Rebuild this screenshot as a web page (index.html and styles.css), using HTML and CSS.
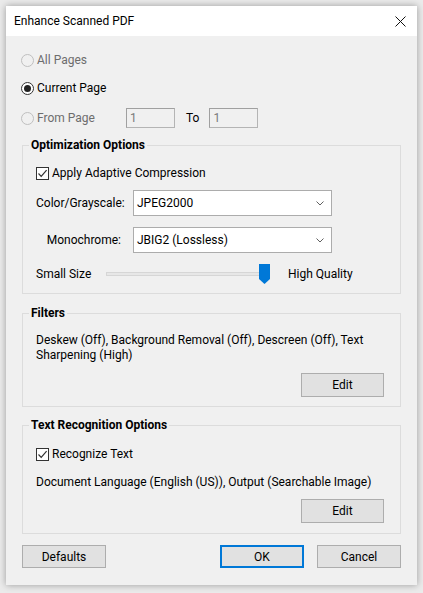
FILE: index.html
```html
<!DOCTYPE html>
<html>
<head>
<meta charset="utf-8">
<title>Enhance Scanned PDF</title>
<link rel="stylesheet" href="styles.css">
</head>
<body>
<div class="dialog">
  <div class="titlebar">
    <span class="title">Enhance Scanned PDF</span>
    <svg class="close" width="11" height="11" viewBox="0 0 11 11"><path d="M0.5 0.5 L10.5 10.5 M10.5 0.5 L0.5 10.5" stroke="#111" stroke-width="1" fill="none"/></svg>
  </div>
  <div class="content">
    <div class="radios">
      <div class="radio-row first disabled"><span class="radio"></span><span>All Pages</span></div>
      <div class="radio-row second"><span class="radio checked"></span><span>Current Page</span></div>
      <div class="radio-row third">
        <span class="radio-label disabled"><span class="radio"></span><span>From Page</span></span>
        <span class="field">1</span>
        <span class="to">To</span>
        <span class="field">1</span>
      </div>
    </div>

    <fieldset class="group opt">
      <legend>Optimization Options</legend>
      <div class="check-row first-check"><span class="checkbox"><svg width="11" height="11" viewBox="0 0 11 11"><path d="M1.5 5.5 L4.2 8.3 L9.6 2.2" stroke="#333" stroke-width="1.2" fill="none"/></svg></span><span>Apply Adaptive Compression</span></div>
      <div class="select-grid">
        <span class="select-label">Color/Grayscale:</span>
        <div class="select"><span>JPEG2000</span><svg width="8" height="5" viewBox="0 0 8 5"><path d="M0.5 0.5 L4 4 L7.5 0.5" stroke="#606060" fill="none"/></svg></div>
        <span class="select-label">Monochrome:</span>
        <div class="select"><span>JBIG2 (Lossless)</span><svg width="8" height="5" viewBox="0 0 8 5"><path d="M0.5 0.5 L4 4 L7.5 0.5" stroke="#606060" fill="none"/></svg></div>
      </div>
      <div class="slider-row">
        <span class="slider-label">Small Size</span>
        <div class="track-wrap">
          <div class="track"></div>
          <svg class="thumb" width="11" height="20" viewBox="0 0 11 20"><path d="M0 0 H11 V15 L5.5 20 L0 15 Z" fill="#0078d7"/></svg>
        </div>
        <span class="slider-high">High Quality</span>
      </div>
    </fieldset>

    <fieldset class="group filters">
      <legend>Filters</legend>
      <p class="desc two-line">Deskew (Off), Background Removal (Off), Descreen (Off), Text<br>Sharpening (High)</p>
      <div class="edit-row filters-edit"><button class="btn">Edit</button></div>
    </fieldset>

    <fieldset class="group ocr">
      <legend>Text Recognition Options</legend>
      <div class="check-row ocr-check"><span class="checkbox"><svg width="11" height="11" viewBox="0 0 11 11"><path d="M1.5 5.5 L4.2 8.3 L9.6 2.2" stroke="#333" stroke-width="1.2" fill="none"/></svg></span><span>Recognize Text</span></div>
      <p class="desc one-line">Document Language (English (US)), Output (Searchable Image)</p>
      <div class="edit-row ocr-edit"><button class="btn">Edit</button></div>
    </fieldset>

    <div class="footer">
      <button class="btn footer-btn">Defaults</button>
      <div class="footer-right">
        <button class="btn footer-btn primary">OK</button>
        <button class="btn footer-btn">Cancel</button>
      </div>
    </div>
  </div>
</div>
</body>
</html>
```

FILE: styles.css
```css
* { box-sizing: border-box; }

html, body {
  margin: 0;
  padding: 0;
}

body {
  width: 423px;
  height: 593px;
  overflow: hidden;
  background: #ebebeb;
  font-family: "Segoe UI", Roboto, "Noto Sans", sans-serif;
  font-size: 12px;
  color: #000;
}

.dialog {
  margin: 6px 0 0 6px;
  width: 411px;
  height: 579px;
  background: #f0f0f0;
  box-shadow: 0 0 7px rgba(0, 0, 0, 0.35);
  display: flex;
  flex-direction: column;
}

.titlebar {
  height: 30px;
  background: #fff;
  display: flex;
  align-items: center;
  justify-content: space-between;
  padding: 0 11px 0 8px;
}

.title {
  font-size: 12px;
  line-height: 16px;
}

.content {
  padding: 0 16px;
  display: flex;
  flex-direction: column;
}

.radios {
  margin-left: -1px;
  display: flex;
  flex-direction: column;
}

.radio-row {
  height: 20px;
  display: flex;
  align-items: center;
  gap: 3px;
}

.radio-row.first { margin-top: 14px; }
.radio-row.second { margin-top: 8px; }
.radio-row.third { margin-top: 10px; gap: 0; }

.disabled { color: #6d6d6d; }

.radio-label {
  display: flex;
  align-items: center;
  gap: 3px;
  width: 105px;
}

.radio {
  width: 13px;
  height: 13px;
  border-radius: 50%;
  border: 1px solid #bfbfbf;
  background: #f0f0f0;
  display: flex;
  align-items: center;
  justify-content: center;
}

.radio.checked {
  border-color: #333;
  background: #fff;
}

.radio.checked::after {
  content: "";
  width: 7px;
  height: 7px;
  border-radius: 50%;
  background: #222;
}

.field {
  width: 49px;
  height: 20px;
  border: 1px solid #b4b4b4;
  border-top-color: #a0a0a0;
  border-left-color: #a0a0a0;
  background: #f0f0f0;
  color: #7a7a7a;
  padding-left: 3px;
  line-height: 18px;
}

.to {
  margin: 0 10px 0 11px;
  color: #000;
}

fieldset.group {
  margin: 0;
  border: 1px solid #dcdcdc;
  padding: 0 16px 9px 13px;
  min-width: 0;
}

legend {
  font-weight: bold;
  padding: 0 2px;
  margin-left: -7px;
  line-height: 16px;
}

.group.opt { margin-top: 9px; }
.group.filters { margin-top: 11px; padding-bottom: 9px; }
.group.ocr { margin-top: 10px; padding-bottom: 10px; }

.check-row {
  height: 16px;
  display: flex;
  align-items: center;
  gap: 3px;
}

.first-check { margin-top: 12px; }
.ocr-check { margin-top: 13px; }

.checkbox {
  width: 13px;
  height: 13px;
  border: 1px solid #333;
  background: #fff;
  display: flex;
  align-items: center;
  justify-content: center;
}

.select-grid {
  margin-top: 9px;
  display: grid;
  grid-template-columns: 85px 199px;
  column-gap: 12px;
  row-gap: 11px;
  align-items: center;
}

.select-label {
  text-align: right;
}

.select {
  height: 26px;
  border: 1px solid #acacac;
  background: #fff;
  display: flex;
  align-items: center;
  justify-content: space-between;
  padding: 0 7px 0 3px;
}

.slider-row {
  margin-top: 11px;
  height: 20px;
  display: flex;
  align-items: center;
}

.slider-label {
  width: 70px;
}

.track-wrap {
  position: relative;
  width: 164px;
  height: 20px;
  display: flex;
  align-items: center;
}

.track {
  width: 161px;
  height: 4px;
  background: #e7e7e7;
  border: 1px solid #d6d6d6;
}

.thumb {
  position: absolute;
  left: 153px;
  top: 0;
}

.slider-high {
  margin-left: 18px;
}

.desc {
  margin: 0;
}

.two-line {
  margin-top: 12px;
  line-height: 15px;
}

.one-line {
  margin-top: 12px;
  line-height: 16px;
}

.edit-row {
  display: flex;
  justify-content: flex-end;
}

.filters-edit { margin-top: 10px; }
.ocr-edit { margin-top: 9px; }

.btn {
  font-family: inherit;
  font-size: 12px;
  color: #000;
  background: #e1e1e1;
  border: 1px solid #adadad;
  width: 83px;
  height: 24px;
  padding: 0;
  margin: 0;
}

.footer {
  margin-top: 11px;
  display: flex;
  justify-content: space-between;
}

.footer-right {
  display: flex;
  gap: 13px;
}

.footer-btn {
  width: 84px;
  height: 23px;
}

.btn.primary {
  border: 2px solid #0078d7;
}
```
